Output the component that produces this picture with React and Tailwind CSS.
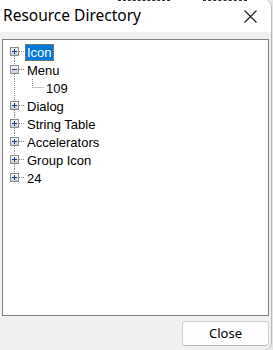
import React from "react";

const items = [
  { label: "Icon", type: "plus", selected: true, first: true },
  { label: "Menu", type: "minus" },
  { label: "109", type: "child" },
  { label: "Dialog", type: "plus" },
  { label: "String Table", type: "plus" },
  { label: "Accelerators", type: "plus" },
  { label: "Group Icon", type: "plus" },
  { label: "24", type: "plus", last: true },
];

function Box({ minus }) {
  return (
    <>
      <defs>
        <linearGradient id="bg" x1="0" y1="0" x2="0" y2="1">
          <stop offset="0" stopColor="#ffffff" />
          <stop offset="1" stopColor="#c8c8c8" />
        </linearGradient>
      </defs>
      <rect x="7.5" y="4.5" width="8" height="8" fill="url(#bg)" stroke="#8d8d8d" />
      <line x1="9" y1="8.5" x2="14" y2="8.5" stroke="#1e3d8c" />
      {!minus && <line x1="11.5" y1="6" x2="11.5" y2="11" stroke="#1e3d8c" />}
    </>
  );
}

function Connector({ item }) {
  const dot = { stroke: "#8a8a8a", strokeDasharray: "1 1" };
  if (item.type === "child") {
    return (
      <svg width="22" height="18" className="shrink-0">
        <line x1="11.5" y1="0" x2="11.5" y2="18" {...dot} />
      </svg>
    );
  }
  return (
    <svg width="22" height="18" className="shrink-0">
      {!item.first && <line x1="11.5" y1="0" x2="11.5" y2="4" {...dot} />}
      {!item.last && <line x1="11.5" y1="13" x2="11.5" y2="18" {...dot} />}
      <line x1="16" y1="8.5" x2="22" y2="8.5" {...dot} />
      <Box minus={item.type === "minus"} />
    </svg>
  );
}

export default function App() {
  return (
    <div className="w-[273px] h-[350px] bg-[#e6e6e6] overflow-hidden">
      <div className="relative w-[272px] h-[350px] flex flex-col rounded-tr-[8px] rounded-br-[8px] overflow-hidden border-r border-[#b8b8b8] bg-[#f0f0f0]">
        <div className="absolute top-0 left-[118px] w-[52px] h-px border-t border-dashed border-[#333]" />
        <div className="absolute top-0 left-[203px] w-[44px] h-px border-t border-dashed border-[#333]" />
        <div className="h-[32px] shrink-0 bg-white flex items-center justify-between pl-[3px] pr-[14px]">
          <span className="text-[15.5px] text-black leading-none" style={{ fontFamily: '"Segoe UI", "Noto Sans", sans-serif' }}>
            Resource Directory
          </span>
          <svg width="13" height="13" viewBox="0 0 13 13">
            <path d="M0.5 0.5 L12.5 12.5 M12.5 0.5 L0.5 12.5" stroke="#1a1a1a" strokeWidth="1.1" />
          </svg>
        </div>
        <div className="flex-1 flex flex-col px-[2px] pt-[7px]">
          <div
            className="h-[277px] border border-[#828282] bg-white pt-[3px] flex flex-col"
            style={{ fontFamily: '"Liberation Sans", Arial, sans-serif' }}
          >
            {items.map((it) => (
              <div key={it.label} className="h-[18px] flex items-center">
                <Connector item={it} />
                {it.type === "child" && (
                  <svg width="19" height="18" className="shrink-0">
                    <line x1="7.5" y1="0" x2="7.5" y2="8.5" stroke="#8a8a8a" strokeDasharray="1 1" />
                    <line x1="7.5" y1="8.5" x2="19" y2="8.5" stroke="#8a8a8a" strokeDasharray="1 1" />
                  </svg>
                )}
                <span
                  className={
                    "h-[17px] flex items-center px-[1px] text-[13px] leading-none " +
                    (it.selected
                      ? "bg-[#0078d7] text-white border border-dotted border-[#d08020]"
                      : "text-black border border-transparent")
                  }
                >
                  {it.label}
                </span>
              </div>
            ))}
          </div>
          <div className="flex justify-end pt-[5px]">
            <button
              className="w-[87px] h-[25px] rounded-[4px] border border-[#d0d0d0] border-b-[#b8b8b8] bg-[#fdfdfd] text-[13px] text-black flex items-center justify-center"
              style={{ fontFamily: '"Segoe UI", "Noto Sans", sans-serif' }}
            >
              Close
            </button>
          </div>
        </div>
      </div>
    </div>
  );
}
